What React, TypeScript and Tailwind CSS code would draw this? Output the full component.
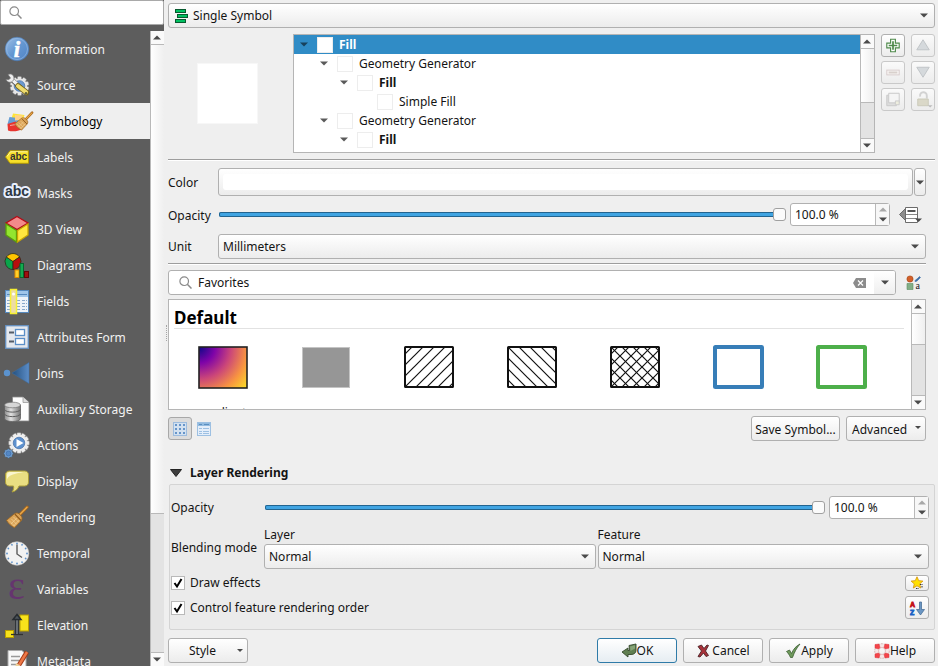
import React, { useId, useState } from "react";
import type { ReactNode } from "react";

const raised = "border border-[#b0b0b0] rounded-[3px] bg-linear-to-b from-white to-[#ececec]";
const raisedDim = "border border-[#c9c9c9] rounded-[3px] bg-linear-to-b from-[#fafafa] to-[#ececec]";

function Caret({ up = false, color = "#4a4a4a", className = "" }: { up?: boolean; color?: string; className?: string }) {
  return (
    <svg viewBox="0 0 8 5" className={`h-[5px] w-2 shrink-0 ${className}`} aria-hidden="true">
      <path d={up ? "M0 4.5 4 0.5l4 4z" : "M0 .5h8L4 4.5z"} fill={color} />
    </svg>
  );
}

function Magnifier() {
  return (
    <svg viewBox="0 0 13 13" className="h-[13px] w-[13px] shrink-0" fill="none" stroke="#8a8a8a" aria-hidden="true">
      <circle cx="5.2" cy="5.2" r="4.3" strokeWidth="1.2" />
      <path d="m8.3 8.3 4.2 4.2" strokeWidth="1.5" />
    </svg>
  );
}

function GearShape({ cx, cy, r, teeth, fill, inner, stroke = "#8b8b8b" }: { cx: number; cy: number; r: number; teeth: number; fill: string; inner: string; stroke?: string }) {
  const toothWidth = r * 0.42;
  return (
    <g transform={`translate(${cx} ${cy})`}>
      {Array.from({ length: teeth }, (_, i) => (
        <rect key={i} x={-toothWidth / 2} y={-r} width={toothWidth} height={r} rx={r * 0.1} fill={fill} stroke={stroke} strokeWidth=".5" transform={`rotate(${(i * 360) / teeth})`} />
      ))}
      <circle r={r * 0.8} fill={fill} />
      <circle r={r * 0.56} fill={inner} stroke="#3f6ca8" strokeWidth=".7" />
    </g>
  );
}

function Broom() {
  return (
    <g>
      <path d="M22.2 2 14 10.500" stroke="#a8661a" strokeWidth="3" strokeLinecap="round" />
      <path d="M22 2.200 14 10.300" stroke="#e8a94c" strokeWidth="1.400" strokeLinecap="round" />
      <path d="M9.500 8.700c1.600-1 3.300-1 4.600.2l2 2.100c1.200 1.300 1.200 2.900.3 4.400l-6.900 7.400c-3.300-1.700-6-4-8-7.500z" fill="#dba458" stroke="#9b6420" strokeWidth=".8" />
      <path d="m4 15.500 5.500 5.500M6.300 13.800l5.200 5.400M8.500 12l5.300 5.300M6 19l6-6.200M8.500 21l5.800-6" stroke="#f3d29a" strokeWidth=".7" />
      <path d="m9.800 9 6.200 6.500" stroke="#8f5a1c" strokeWidth="1.100" />
    </g>
  );
}

const icons: Record<string, ReactNode> = {
  Information: (
    <>
      <defs>
        <linearGradient id="info" x1="0" y1="0" x2="1" y2="1">
          <stop stopColor="#9fc0e6" /><stop offset=".5" stopColor="#6497d2" /><stop offset="1" stopColor="#5083c4" />
        </linearGradient>
      </defs>
      <circle cx="12" cy="12" r="11.800" fill="url(#info)" stroke="#4a7ebd" strokeWidth=".5" />
      <circle cx="12" cy="12" r="10.500" fill="none" stroke="#9cbde4" strokeWidth=".6" />
      <text x="12" y="19.500" textAnchor="middle" fill="#fff" stroke="#fff" strokeWidth=".5" fontSize="23" fontWeight="bold" fontStyle="italic" fontFamily="Liberation Serif, serif">i</text>
    </>
  ),
  Source: (
    <>
      <GearShape cx={14.500} cy={13} r={9.500} teeth={10} fill="#e6e6e6" inner="#6c9ad0" />
      <path d="m7 7 9 8" stroke="#555" strokeWidth="4.500" />
      <path d="M7 6.500 14 13" stroke="#f2f2f2" strokeWidth="3.200" />
      <path d="M3 1.500c3-1.600 6 .4 6 3.500 0 3.300-3.500 5.400-6.500 3.600L.8 6.800 4 6.600 5.500 5z" fill="#eee" stroke="#777" strokeWidth=".7" />
      <path d="m13 13 8.500 6.500" stroke="#75621d" strokeWidth="5.500" strokeLinecap="round" />
      <path d="m13 13 8 6.200" stroke="#efdc6d" strokeWidth="4" strokeLinecap="round" />
      <circle cx="21" cy="20.200" r="1.200" fill="#5f6340" />
    </>
  ),
  Symbology: (
    <>
      <path d="M5 4.500 16.500 6l-3 8L3 11z" fill="#ffe436" />
      <path d="m1.500 8 8.500 1 1.500 7L-.5 15z" fill="#679ed4" />
      <path d="m-.5 15 8-2.500 7 7.500c-5 2.500-10 3-14.500 1.500z" fill="#e8352f" />
      <path d="m7 6 8 .4-2.500 4.600-5.500.5z" fill="#ffd18a" />
      <path d="m2 16.500 6-1" stroke="#f7a6a0" />
      <g transform="translate(5.500 2) scale(.84)"><Broom /></g>
    </>
  ),
  Labels: (
    <>
      <path d="M.5 12 5 5.700h18.500v12.600H5z" fill="#f7df29" stroke="#b49a05" />
      <path d="M2 11.500 5.500 6.800h17" stroke="#fff7a0" fill="none" />
      <text x="13.500" y="15" textAnchor="middle" fontSize="10" fontWeight="bold" fontFamily="Liberation Sans, Arial, sans-serif" fill="#333">abc</text>
    </>
  ),
  Masks: (
    <text x="12" y="15" textAnchor="middle" fontSize="14" fontWeight="bold" fontFamily="Liberation Sans, Arial, sans-serif" fill="#2c3744" stroke="#e9effd" strokeWidth="4" strokeLinejoin="round" paintOrder="stroke">abc</text>
  ),
  "3D View": (
    <>
      <path d="m12-.5 11 6.500L12 12.500 1 6z" fill="#f38a8a" stroke="#b40b16" strokeWidth="1.300" />
      <path d="M1 7 11.500 13.500V25L1 18z" fill="#93e52f" stroke="#5a9d0b" strokeWidth="1.300" />
      <path d="M23 7 12.500 13.500V25L23 18z" fill="#ffe63f" stroke="#c8a600" strokeWidth="1.300" />
    </>
  ),
  Diagrams: (
    <>
      <g stroke="#2c2c1d" strokeWidth=".8">
        <path d="M8 8.500V16.500A8 8 0 0 1 1.400 4z" fill="#0aa54b" />
        <path d="M8 8.500 1.400 4a8 8 0 0 1 13.200 0z" fill="#ffc400" />
        <path d="M8 8.500 14.600 4A8 8 0 0 1 8 16.500z" fill="#b90d0d" />
      </g>
      <rect x="10" y="17" width="4" height="7.500" fill="#ffd12b" stroke="#e08a00" />
      <rect x="15" y="10.500" width="3.500" height="14" fill="#13ab50" stroke="#08642d" />
      <rect x="19.500" y="18.500" width="4" height="6" fill="#9e1010" stroke="#640606" />
    </>
  ),
  Fields: (
    <>
      <rect x=".5" y="1.500" width="23" height="22" fill="#eef3f9" stroke="#5588bd" />
      <rect x="1" y="2" width="22" height="6" fill="#9fc5ea" />
      <path d="M2 5.500h20" stroke="#5588bd" />
      <path d="M2 11.500h20M2 14.500h20M2 17.500h20M2 20.500h20" stroke="#8aa9cc" strokeDasharray="3 1 9 2" />
      <rect x="5.500" y=".5" width="6" height="24" fill="#ecdba5" stroke="#f6f032" strokeWidth="1.500" />
      <circle cx="8.500" cy="5" r="1.500" fill="#fff" />
    </>
  ),
  "Attributes Form": (
    <>
      <rect x=".7" y=".7" width="22.600" height="22.600" fill="#e4e8ee" stroke="#6591c2" strokeWidth="1.300" />
      <path d="M4 7.500h5M4 16.500h5" stroke="#545d68" strokeWidth="2" />
      <rect x="10.500" y="4.500" width="9" height="6" fill="#fff" stroke="#5b8fc8" strokeWidth="1.300" />
      <rect x="10.500" y="13.500" width="9" height="6" fill="#fff" stroke="#5b8fc8" strokeWidth="1.300" />
    </>
  ),
  Joins: (
    <>
      <defs>
        <linearGradient id="join"><stop stopColor="#23507f" /><stop offset="1" stopColor="#5b8cc6" /></linearGradient>
      </defs>
      <circle cx="2" cy="12" r="3.200" fill="#5b93cf" />
      <path d="M7 12 24 1.500V22.500z" fill="url(#join)" stroke="#3c6fa5" strokeWidth=".5" />
    </>
  ),
  "Auxiliary Storage": (
    <>
      <defs>
        <linearGradient id="drum"><stop stopColor="#8b8b8b" /><stop offset=".4" stopColor="#e1e1e1" /><stop offset="1" stopColor="#747474" /></linearGradient>
      </defs>
      <path d="M7.500 0h10.500l6 5.500V24H7.500z" fill="#fdfdfd" stroke="#888" strokeWidth=".8" />
      <path d="M18 0v5.500h6" fill="#ddd" stroke="#999" strokeWidth=".8" />
      <path d="M-.5 8v13.500c0 4 16 4 16 0V8z" fill="url(#drum)" stroke="#606060" strokeWidth=".8" />
      <ellipse cx="7.500" cy="8" rx="8" ry="2.800" fill="#d6d6d6" stroke="#707070" strokeWidth=".7" />
      <path d="M-.5 12.500c1 3.500 15 3.500 16 0M-.5 17c1 3.500 15 3.500 16 0" fill="none" stroke="#5e5e5e" />
    </>
  ),
  Actions: (
    <>
      <GearShape cx={14} cy={10} r={10.300} teeth={12} fill="#eeeeee" inner="#5d91ce" />
      <path d="m11.500 6 7 4-7 4z" fill="#fff" />
      <GearShape cx={3.500} cy={20.500} r={4.500} teeth={8} fill="#78a6d7" inner="#5488c5" stroke="#426f9e" />
    </>
  ),
  Display: (
    <>
      <path d="M4.500 2h15C22 2 23.500 3.500 23.500 6v7c0 2.500-1.500 4-4 4H14c-1 3-3.500 5.500-7 6 1.500-2 2-4 1.500-6h-4C2 17 .5 15.500.5 13V6C.5 3.500 2 2 4.500 2z" fill="#e9de82" stroke="#aa9d3a" />
      <path d="M2 10V6c0-2 1-3 3-3h14c-3 1-14 1-17 7z" fill="#faf6cf" />
    </>
  ),
  Rendering: <Broom />,
  Temporal: (
    <>
      <circle cx="12" cy="12.500" r="11.800" fill="#f2f2f2" stroke="#c8c8c8" strokeWidth=".6" />
      {Array.from({ length: 12 }, (_, i) => (
        <circle key={i} cx="12" cy="2.500" r=".9" fill="#5b8fc8" transform={`rotate(${i * 30} 12 12.5)`} />
      ))}
      <path d="M12 3.500V13l5 3.500" fill="none" stroke="#5d5d5d" strokeWidth="1.400" />
    </>
  ),
  Variables: (
    <text x="11.500" y="22" textAnchor="middle" fontSize="40" fontFamily="Liberation Serif, serif" fill="#65356f">ε</text>
  ),
  Elevation: (
    <>
      <rect x="15" y="2" width="8.500" height="16" fill="#f7e21c" stroke="#b89e00" />
      <rect x=".5" y="17.500" width="8" height="7" fill="#f7e21c" stroke="#b89e00" />
      <path d="M6 21.500h12" stroke="#303030" strokeWidth="1.300" />
      <path d="M12 21V4" stroke="#262b30" strokeWidth="3.600" />
      <path d="M12 21V5" stroke="#848b92" strokeWidth="1.400" />
      <path d="m8 6.500 4-5 4 5z" fill="#4d555c" stroke="#262b30" strokeWidth="1.500" />
    </>
  ),
  Metadata: (
    <>
      <path d="M3 1.500h14l4 4V24H3z" fill="#f8f8f8" stroke="#aaa" />
      <path d="M6 7.500h9M6 11.500h8M6 15.500h7" stroke="#999" strokeWidth="1.300" />
      <path d="m22 3-8 13" stroke="#a43813" strokeWidth="4.500" />
      <path d="m22 3-8 13" stroke="#ee7847" strokeWidth="2.500" />
      <path d="m11 14 4 2.500-5 3z" fill="#eed29b" />
    </>
  ),
};

function Scrollbar({ thumb, track }: { thumb: string; track: string }) {
  return (
    <div className="flex w-[14px] shrink-0 flex-col border-l border-[#b9b9b9] bg-[#e3e3e3]">
      <button type="button" aria-label="Scroll up" className="flex h-[14px] shrink-0 items-center justify-center border-b border-[#b9b9b9] bg-[#fafafa] pr-px">
        <Caret up />
      </button>
      <div className={`border-b border-[#b9b9b9] bg-linear-to-r from-white to-[#efefef] ${thumb}`} />
      <div className={track} />
      <button type="button" aria-label="Scroll down" className="flex h-[14px] shrink-0 items-center justify-center border-t border-[#b9b9b9] bg-[#fafafa] pr-px">
        <Caret />
      </button>
    </div>
  );
}

function Select({ id, label, value, icon, className = "" }: { id?: string; label?: string; value: string; icon?: ReactNode; className?: string }) {
  return (
    <div className={`relative ${className}`}>
      <select id={id} aria-label={label} className={`block h-[25px] w-full appearance-none ${raised} pr-6 outline-none ${icon ? "pl-6" : "pl-1"}`}>
        <option>{value}</option>
      </select>
      {icon && <span className="pointer-events-none absolute inset-y-0 left-[7px] flex items-center">{icon}</span>}
      <span className="pointer-events-none absolute inset-y-0 right-[7px] flex items-center"><Caret /></span>
    </div>
  );
}

function Slider({ id, className = "" }: { id: string; className?: string }) {
  return (
    <input
      id={id}
      type="range"
      defaultValue={100}
      className={`h-[13px] min-w-0 appearance-none bg-transparent outline-none [&::-webkit-slider-runnable-track]:h-[5px] [&::-webkit-slider-runnable-track]:rounded-[2px] [&::-webkit-slider-runnable-track]:bg-[#40a4e2] [&::-webkit-slider-runnable-track]:shadow-[inset_0_0_0_1px_#22648f] [&::-webkit-slider-thumb]:-mt-1 [&::-webkit-slider-thumb]:h-[13px] [&::-webkit-slider-thumb]:w-[13px] [&::-webkit-slider-thumb]:appearance-none [&::-webkit-slider-thumb]:rounded-[3px] [&::-webkit-slider-thumb]:border [&::-webkit-slider-thumb]:border-[#a0a0a0] [&::-webkit-slider-thumb]:bg-[#fbfbfb] ${className}`}
    />
  );
}

function SpinBox({ label }: { label: string }) {
  return (
    <div className="flex h-[23px] w-[100px] shrink-0 rounded-[3px] border border-[#b0b0b0] bg-white">
      <input aria-label={label} defaultValue="100.0 %" className="min-w-0 flex-1 bg-transparent pl-1 outline-none" />
      <div className="flex w-[14px] flex-col border-l border-[#b9b9b9] bg-[#f7f7f7]">
        <button type="button" aria-label="Increase" className="flex flex-1 items-center justify-center"><Caret up color="#a8a8a8" /></button>
        <button type="button" aria-label="Decrease" className="flex flex-1 items-center justify-center"><Caret /></button>
      </div>
    </div>
  );
}

function Divider({ className = "" }: { className?: string }) {
  return <div className={`h-[2px] shrink-0 border-t border-[#9d9d9d] bg-white ${className}`} />;
}

function Sidebar() {
  const [current, setCurrent] = useState("Symbology");
  return (
    <aside className="flex w-[164px] shrink-0 flex-col bg-[#5d5d5d]">
      <label className="flex h-[25px] shrink-0 items-center rounded-[2px] border border-[#a9a9a9] bg-white pl-2">
        <Magnifier />
        <input type="search" aria-label="Search settings" className="min-w-0 flex-1 bg-transparent pl-2 outline-none" />
      </label>
      <div className="mt-[6px] flex min-h-0 flex-1">
        <nav className="min-w-0 flex-1 overflow-hidden">
          {Object.keys(icons).map((name) => {
            const active = name === current;
            return (
              <button
                key={name}
                type="button"
                aria-current={active ? "page" : undefined}
                onClick={() => setCurrent(name)}
                className={`flex h-9 w-full items-center gap-2 text-left whitespace-nowrap ${active ? "bg-[#efefef] pl-2 text-black" : "pl-[5px] text-[#f2f2f2]"}`}
              >
                <svg viewBox="0 0 24 24" fill="none" className="h-6 w-6 shrink-0 overflow-visible" aria-hidden="true">{icons[name]}</svg>
                <span className="pt-[2px]">{name}</span>
              </button>
            );
          })}
        </nav>
        <Scrollbar thumb="flex-[469]" track="flex-[138]" />
      </div>
    </aside>
  );
}

const tree = [
  { name: "Fill", indent: "pl-[6px]", bold: true, open: true },
  { name: "Geometry Generator", indent: "pl-[26px]", bold: false, open: true },
  { name: "Fill", indent: "pl-[46px]", bold: true, open: true },
  { name: "Simple Fill", indent: "pl-[66px]", bold: false, open: false },
  { name: "Geometry Generator", indent: "pl-[26px]", bold: false, open: true },
  { name: "Fill", indent: "pl-[46px]", bold: true, open: true },
];

function SymbolTree() {
  return (
    <div className="flex min-w-0 flex-1 overflow-hidden border border-[#b5b5b5] bg-white">
      <ul role="tree" aria-label="Symbol layers" className="min-w-0 flex-1">
        {tree.map((node, i) => (
          <li
            key={i}
            role="treeitem"
            aria-selected={i === 0}
            className={`flex h-[19px] items-center ${node.indent} ${node.bold ? "font-bold" : ""} ${i === 0 ? "bg-[#308cc6] text-white" : ""}`}
          >
            <span className="w-[17px]">{node.open && <Caret color={i === 0 ? "#17415c" : "#5a5a5a"} />}</span>
            <span className="mr-[6px] h-4 w-4 border border-[#ededed] bg-white" />
            {node.name}
          </li>
        ))}
      </ul>
      <Scrollbar thumb="flex-[54]" track="flex-[35]" />
    </div>
  );
}

const layerTools = [
  { name: "Add symbol layer", on: true, art: <><path d="M8.500 4.500h5v4h4v5h-4v4h-5v-4h-4v-5h4z" fill="#fff" stroke="#4f8a4b" strokeWidth="1.200" /><path d="M11 6.500v9M6.500 11h9" stroke="#4f8a4b" strokeWidth="1.800" /></> },
  { name: "Move up", on: false, art: <path d="m11 5 6.500 10.500h-13z" fill="#d5d9dc" stroke="#bfc3c6" /> },
  { name: "Remove symbol layer", on: false, art: <><rect x="4.500" y="8.500" width="13" height="5" fill="#f7f4f3" stroke="#d8cccc" /><path d="M6.500 11h9" stroke="#d8d0cc" strokeWidth="2" /></> },
  { name: "Move down", on: false, art: <path d="M4.500 5.500h13L11 16z" fill="#d5d9dc" stroke="#bfc3c6" /> },
  { name: "Duplicate", on: false, art: <><path d="M4.500 6.500h10v11h-10z" fill="#ddd" stroke="#c8c8c8" /><path d="M6.500 4.500h11v10h-11z" fill="#f5f5f5" stroke="#c8c8c8" /><path d="M13.500 12.500h4v4h-4z" fill="#eeeedf" stroke="#ccc" /></> },
  { name: "Lock colors", on: false, art: <><path d="M8 8c-1-6 7-6 7-1v3" fill="none" stroke="#d2d2d2" strokeWidth="2" /><path d="M5.500 10.500h11v7h-11z" fill="#dad8c8" stroke="#cbc9ba" /><path d="M16 17h5l-2.500 2.500z" fill="#bbb" /></> },
];

function Swatch({ children }: { children: ReactNode }) {
  return (
    <svg viewBox="0 0 52 44" className="h-[44px] w-[52px]" fill="none" aria-hidden="true">
      {children}
    </svg>
  );
}

function Hatched({ id, forward, backward, step }: { id: string; forward?: boolean; backward?: boolean; step: number }) {
  return (
    <Swatch>
      <defs>
        <pattern id={id} width={step} height={step} patternUnits="userSpaceOnUse">
          {forward && <path d={`M-2 2 2-2M0 ${step} ${step} 0M${step - 2} ${step + 2}l4-4`} stroke="#111" strokeWidth="1.200" />}
          {backward && <path d={`M-2 ${step - 2}l4 4M0 0 ${step} ${step}M${step - 2}-2l4 4`} stroke="#111" strokeWidth="1.200" />}
        </pattern>
      </defs>
      <rect x="2" y="2" width="48" height="40" rx=".5" fill={`url(#${id})`} stroke="#111" strokeWidth="2" />
    </Swatch>
  );
}

const swatches: { name: string; art: ReactNode }[] = [
  {
    name: "gradient",
    art: (
      <Swatch>
        <defs>
          <radialGradient id="plasma" gradientUnits="userSpaceOnUse" cx="2" cy="2" r="64">
            <stop stopColor="#0d0887" /><stop offset=".25" stopColor="#7e03a8" /><stop offset=".5" stopColor="#cb4679" />
            <stop offset=".75" stopColor="#f89441" /><stop offset="1" stopColor="#fbe723" />
          </radialGradient>
        </defs>
        <rect x="2" y="2" width="48" height="41" fill="url(#plasma)" stroke="#222" strokeWidth="1.600" />
      </Swatch>
    ),
  },
  { name: "", art: <Swatch><rect x="2.500" y="2.500" width="47" height="40" fill="#969696" stroke="#c4c4c4" /></Swatch> },
  { name: "", art: <Hatched id="hatch-forward" forward step={11} /> },
  { name: "", art: <Hatched id="hatch-backward" backward step={11} /> },
  { name: "", art: <Hatched id="hatch-cross" forward backward step={11} /> },
  { name: "", art: <Swatch><rect x="3" y="2" width="47" height="40" rx=".5" stroke="#377eb8" strokeWidth="4" /></Swatch> },
  { name: "", art: <Swatch><rect x="3" y="2" width="47" height="40" rx=".5" stroke="#4daf4a" strokeWidth="4" /></Swatch> },
];

function SwatchList() {
  return (
    <div className="mt-1 mr-[9px] flex min-h-0 flex-1 overflow-hidden border border-[#b5b5b5] bg-white">
      <div className="min-w-0 flex-1 overflow-hidden">
        <h2 className="mr-[7px] ml-[5px] h-[29px] border-b border-[#e2e2e2] pt-[4px] text-[17px] leading-[27px] font-bold text-black">Default</h2>
        <ul className="flex flex-wrap pt-4 pl-[2px]">
          {swatches.map((s, i) => (
            <li key={i} className="flex w-[103px] flex-col items-center">
              {s.art}
              <span className="mt-[15px] leading-[18px]">{s.name}</span>
            </li>
          ))}
        </ul>
      </div>
      <Scrollbar thumb="flex-[31]" track="flex-[51]" />
    </div>
  );
}

function SheetIcon() {
  return (
    <svg viewBox="0 0 14 14" className="h-[14px] w-[14px]" fill="none" aria-hidden="true">
      <rect x=".5" y=".5" width="13" height="13" fill="#e4eefa" stroke="#9dc0e2" />
      <path d="M1 2.500h12" stroke="#92bbe0" strokeWidth="3" />
      <path d="M2 2.500h3M7 2.500h5" stroke="#5c8fc0" />
      <path d="M2 6.500h10M2 9.500h10M2 11.500h10" stroke="#9dc0e2" strokeDasharray="3 1 6 1" />
    </svg>
  );
}

function GridIcon() {
  return (
    <svg viewBox="0 0 14 14" className="h-[14px] w-[14px]" fill="none" aria-hidden="true">
      <rect x=".5" y=".5" width="13" height="13" fill="#d3e1f0" stroke="#9dbcde" />
      {[2, 6, 10].map((y) => [2, 6, 10].map((x) => <rect key={`${x}-${y}`} x={x} y={y} width="2" height="2" fill="#6795c9" />))}
    </svg>
  );
}

function CheckRow({ label, children }: { label: string; children: ReactNode }) {
  const id = useId();
  return (
    <div className="flex items-center">
      <input
        id={id}
        type="checkbox"
        defaultChecked
        className="peer h-[14px] w-[14px] shrink-0 appearance-none border border-[#b9b9b9] bg-white"
      />
      <svg viewBox="0 0 14 14" className="pointer-events-none invisible -ml-[14px] h-[14px] w-[14px] shrink-0 peer-checked:visible" fill="none" aria-hidden="true">
        <path d="m3.500 7 2.500 3.500 4.500-7.500" stroke="#000" strokeWidth="2" />
      </svg>
      <label htmlFor={id} className="flex-1 pl-[5px]">{label}</label>
      {children}
    </div>
  );
}

function DialogButton({ label, primary = false, children }: { label: string; primary?: boolean; children: ReactNode }) {
  return (
    <button type="button" className={`flex h-[25px] w-20 items-center justify-center rounded-[3px] border bg-linear-to-b from-white ${primary ? "border-[#2f7ba8] to-[#e6edf2]" : "border-[#b0b0b0] to-[#ececec]"}`}>
      <svg viewBox="0 0 16 16" className="h-4 w-4" fill="none" aria-hidden="true">{children}</svg>
      {label}
    </button>
  );
}

export default function App() {
  return (
    <div className="flex h-screen w-full overflow-hidden bg-[#efefef] font-['Noto_Sans','Liberation_Sans',sans-serif] text-[12px] leading-[18px] text-[#141414]">
      <Sidebar />
      <div className="flex w-1 shrink-0 items-center justify-center">
        <div className="h-4 border-l border-dotted border-[#a5a5a5]" />
      </div>
      <main className="flex min-w-0 flex-1 flex-col py-[3px] pr-[3px]">
        <Select
          label="Symbol type"
          value="Single Symbol"
          icon={
            <svg viewBox="0 0 14 14" className="h-[14px] w-[14px]" fill="#00c060" stroke="#08592f" aria-hidden="true">
              <rect x=".5" y=".5" width="10" height="3" /><rect x="2.500" y="5.500" width="10" height="3" /><rect x=".5" y="10.500" width="10" height="3" />
            </svg>
          }
        />

        <section className="mt-[6px] flex h-[119px] shrink-0">
          <div className="flex w-[125px] shrink-0 items-center pl-[29px]">
            <div className="h-[61px] w-[61px] border border-[#f7f7f7] bg-white" />
          </div>
          <SymbolTree />
          <div className="ml-[6px] grid grid-cols-2 content-start gap-x-[6px] gap-y-1">
            {layerTools.map((t) => (
              <button key={t.name} type="button" aria-label={t.name} disabled={!t.on} className={`h-[23px] w-6 ${t.on ? raised : raisedDim}`}>
                <svg viewBox="0 0 22 22" className="h-[21px] w-[22px]" fill="none" aria-hidden="true">{t.art}</svg>
              </button>
            ))}
          </div>
        </section>

        <Divider className="mt-[6px]" />

        <div className="mt-[7px] mr-[9px] flex items-center">
          <label htmlFor="color" className="w-[50px] shrink-0 pt-[2px]">Color</label>
          <button id="color" type="button" className={`h-7 flex-1 p-1 ${raised}`}>
            <span className="block h-4 rounded-[3px] bg-white" />
          </button>
          <button type="button" aria-label="Color options" className={`ml-px flex h-7 w-3 items-center justify-center ${raised}`}>
            <Caret />
          </button>
        </div>

        <div className="mt-[7px] mr-[9px] flex items-center">
          <label htmlFor="opacity" className="w-[51px] shrink-0 pt-[2px]">Opacity</label>
          <Slider id="opacity" className="mr-1 flex-1" />
          <SpinBox label="Opacity percent" />
          <button type="button" aria-label="Data defined override" className="ml-2 h-[23px] w-7">
            <svg viewBox="0 0 28 23" className="h-[23px] w-7" fill="none" aria-hidden="true">
              <path d="m1.500 11.500 6-6v12z" fill="#8d8d8d" stroke="#6b6b6b" />
              <path d="M7.500 4.500h12v15h-12z" fill="#fff" stroke="#6b6b6b" />
              <path d="M8 11.500h11M8 15.500h11" stroke="#888" />
              <path d="M9.500 8h8" stroke="#555" strokeWidth="2" />
              <path d="M17 15.500h7L20.500 19z" fill="#4a4a4a" />
            </svg>
          </button>
        </div>

        <div className="mt-2 mr-[9px] flex items-center">
          <label htmlFor="unit" className="w-[50px] shrink-0">Unit</label>
          <Select id="unit" value="Millimeters" className="flex-1" />
        </div>

        <Divider className="mt-1 mr-[9px]" />

        <div className="mt-[5px] mr-[9px] flex items-center">
          <div className="flex h-[25px] min-w-0 flex-1 items-center rounded-[3px] border border-[#b0b0b0] bg-white pl-[10px]">
            <Magnifier />
            <input aria-label="Symbol group" defaultValue="Favorites" className="min-w-0 flex-1 bg-transparent pl-[6px] outline-none" />
            <button type="button" aria-label="Clear" className="mr-2">
              <svg viewBox="0 0 14 10" className="h-[10px] w-[14px]" aria-hidden="true">
                <path d="M4 0h10v10H4L1 5z" fill="#8c8c8c" /><path d="m6 2.500 5 5m0-5-5 5" stroke="#fff" strokeWidth="1.200" />
              </svg>
            </button>
            <button type="button" aria-label="Show groups" className="flex h-full w-[21px] items-center justify-center rounded-r-[2px] bg-linear-to-b from-white to-[#efefef]">
              <Caret />
            </button>
          </div>
          <button type="button" aria-label="Style manager" className="ml-[9px] w-[21px]">
            <svg viewBox="0 0 16 16" className="h-4 w-4" aria-hidden="true">
              <circle cx="5" cy="4" r="3.100" fill="#d3602b" stroke="#a3430f" strokeWidth=".6" />
              <path d="M2 8.500h6v6H2z" fill="#82ae86" stroke="#5c8d61" strokeWidth=".6" />
              <path d="M10 6.500c0-2 1.500-2 2-2.500l2.500-2.500 1 1L13 5c-1 1.500-2 1.500-3 1.500z" fill="#3c6ea8" stroke="#3c6ea8" strokeWidth=".6" />
              <text x="10.500" y="14" fontSize="10" fontFamily="Liberation Serif, serif" fill="#222">a</text>
            </svg>
          </button>
        </div>

        <SwatchList />

        <div className="mt-[6px] mr-[9px] flex items-center">
          <button type="button" aria-label="Icon view" aria-pressed="true" className="flex h-[23px] w-6 items-center justify-center rounded-[3px] border border-[#a8a8a8] bg-[#dcdcdc]">
            <GridIcon />
          </button>
          <button type="button" aria-label="List view" className="flex h-[23px] w-6 items-center justify-center">
            <SheetIcon />
          </button>
          <button type="button" className={`ml-auto h-[25px] w-[89px] pt-[2px] whitespace-nowrap ${raised}`}>Save Symbol...</button>
          <button type="button" className={`ml-[6px] flex h-[25px] w-20 items-start justify-between pt-1 pr-1 pl-[5px] ${raised}`}>
            Advanced
            <Caret className="mt-1 w-[6px]" />
          </button>
        </div>

        <h2 className="mt-[23px]">
          <button type="button" aria-expanded="true" className="flex h-[18px] items-center pl-[2px] font-bold">
            <svg viewBox="0 0 12 8" className="mr-2 h-2 w-3" aria-hidden="true"><path d="M.5.500h11L6 7.500z" fill="#3e3e3e" stroke="#222" /></svg>
            Layer Rendering
          </button>
        </h2>

        <section className="mt-[2px] ml-px rounded-[2px] border border-[#d4d4d4] bg-[#ebebeb] px-px pt-[11px] pb-[10px]">
          <div className="mr-1 flex items-center">
            <label htmlFor="layer-opacity" className="w-[94px] shrink-0">Opacity</label>
            <Slider id="layer-opacity" className="mr-1 flex-1" />
            <SpinBox label="Layer opacity percent" />
          </div>
          <div className="mt-[6px] mr-1 flex items-center">
            <span className="w-[93px] shrink-0 pt-[2px]">Blending mode</span>
            <div className="grid flex-1 grid-cols-2 gap-x-[2px]">
              <label htmlFor="blend-layer" className="pt-px">Layer</label>
              <label htmlFor="blend-feature" className="pt-px">Feature</label>
              <Select id="blend-layer" value="Normal" />
              <Select id="blend-feature" value="Normal" />
            </div>
          </div>
          <div className="mt-[5px] mr-1 flex flex-col gap-1">
            <CheckRow label="Draw effects">
              <button type="button" aria-label="Customize effects" className={`flex h-4 w-6 items-center justify-center ${raised}`}>
                <svg viewBox="0 0 14 14" className="h-[14px] w-[14px]" aria-hidden="true">
                  <path d="m7 .8 1.700 3.900 4.200.4-3.200 2.800 1 4.100L7 9.800 3.300 12l1-4.100L1.100 5.100l4.200-.4z" fill="#ffe000" stroke="#d99a10" strokeWidth=".9" />
                  <path d="M10 8.500h3M6 12.500h3M12 10v2" stroke="#333" strokeDasharray="1.500 1" />
                </svg>
              </button>
            </CheckRow>
            <CheckRow label="Control feature rendering order">
              <button type="button" aria-label="Define order" className={`flex h-[23px] w-6 items-center justify-center ${raised}`}>
                <svg viewBox="0 0 16 16" className="h-4 w-4" aria-hidden="true">
                  <text x="1" y="6.500" fontSize="7" fontWeight="bold" fontFamily="Liberation Sans, sans-serif" fill="#c4161c" stroke="#c4161c" strokeWidth=".8">A</text>
                  <text x="1" y="14.500" fontSize="7" fontWeight="bold" fontFamily="Liberation Sans, sans-serif" fill="#1c62c4" stroke="#1c62c4" strokeWidth=".8">Z</text>
                  <path d="M10.500 2h2v7.500h3L11.500 15l-4-5.500h3z" fill="#6b96c3" stroke="#3d668f" strokeWidth=".7" />
                </svg>
              </button>
            </CheckRow>
          </div>
        </section>

        <footer className="mt-2 flex gap-[6px]">
          <button type="button" className={`mr-auto flex h-[25px] w-20 items-start justify-between pt-[3px] pr-1 pl-5 ${raised}`}>
            Style
            <Caret className="mt-[6px] w-[6px]" />
          </button>
          <DialogButton label="OK" primary>
            <path d="M8 2.500 15 1v6c0 3-2 4.500-5 4.500H7V14L1 9l6-4v2.500h1.500z" fill="#5f7f52" stroke="#35492d" strokeWidth=".9" />
            <path d="M9 3.500 14 2.300v3.200L9.500 8" fill="#86a477" />
          </DialogButton>
          <DialogButton label="Cancel">
            <path d="M2 3.500 5.500 2c1 1.500 1.800 2.500 2.500 3.500L11 2l1.500.5L9.500 8l3 4.500-2.500 1L7.500 10 4 14l-2-.5L5.500 8z" fill="#a8323a" stroke="#4c2226" strokeWidth=".9" />
          </DialogButton>
          <DialogButton label="Apply">
            <path d="m1.500 8.500 3-1.500 2 3.500C8.500 6 11 3 15 1c-3.500 4-5.500 8-7.500 13.500H5.500C4.500 12 3 10 1.500 8.500z" fill="#6f9a5c" stroke="#3c5e32" strokeWidth=".8" />
          </DialogButton>
          <DialogButton label="Help">
            <circle cx="8" cy="8" r="5.500" stroke="#f6e6e6" strokeWidth="4" />
            <circle cx="8" cy="8" r="7.300" stroke="#c9a0a0" strokeWidth=".7" strokeDasharray="2 1" />
            <circle cx="8" cy="8" r="3.500" stroke="#d9a5a5" strokeWidth=".7" />
            <path d="M1 1.500 5 1l1 3.500L4.500 6 1 5zM15 1.500 11 1l-1 3.500L11.500 6 15 5zM15 14.500l-4 .5-1-3.500 1.500-1.500 3.500 1zM1 14.500l4 .5 1-3.500L4.500 10 1 11z" fill="#f4444a" stroke="#d9363c" strokeWidth=".5" />
          </DialogButton>
        </footer>
      </main>
    </div>
  );
}
